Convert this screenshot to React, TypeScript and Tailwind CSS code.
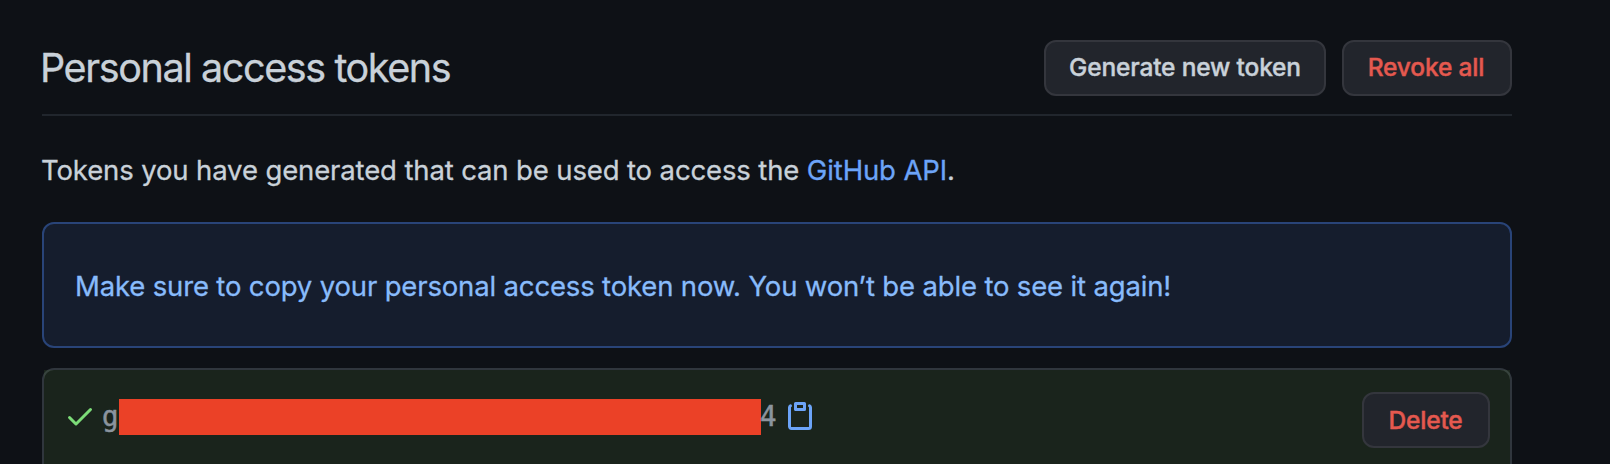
const buttonClass =
  "flex h-14 shrink-0 items-center justify-center rounded-xl border-2 border-[#34363d] bg-[#22252c] text-[24.5px] font-medium leading-none tracking-[-0.17px] [-webkit-text-stroke:0.4px]";

export default function App() {
  return (
    <main className="flex h-[464px] w-full flex-col overflow-hidden bg-[#0e1116] pr-[98px] pl-[42px] font-['Inter',sans-serif] text-[#c9d1d9] [-webkit-text-stroke:0.3px]">
      <header className="flex h-[116px] shrink-0 justify-between border-b-2 border-[#21262d] pt-10">
        <h1 className="-ml-0.5 pt-1 text-[39.5px] leading-[48px] tracking-[-1.4px]">Personal access tokens</h1>
        <div className="flex gap-4">
          <button className={`${buttonClass} w-[282px] pb-0.5`}>Generate new token</button>
          <button className={`${buttonClass} w-[170px] pr-0.5 pb-0.5 text-[#e5594f]`}>Revoke all</button>
        </div>
      </header>
      <p className="mt-[34px] -ml-px h-[72px] shrink-0 text-[27.5px] leading-10 tracking-[-0.13px]">
        Tokens you have generated that can be used to access the <a className="text-[#6ca4f8]">GitHub API</a>.
      </p>
      <section className="flex h-[126px] shrink-0 items-center rounded-xl border-2 border-[#294478] bg-[#151d2d] pt-1 pl-[31px] text-[27.5px] tracking-[-0.16px] text-[#88bbfb]">
        Make sure to copy your personal access token now. You won’t be able to see it again!
      </section>
      <section className="mt-5 h-[120px] shrink-0 rounded-t-xl border-2 border-[#30363d]">
        <div className="flex h-full justify-between bg-[#649645]/15 pt-[22px] pr-5 pl-5">
          <div className="flex h-[50px] items-center">
            <svg viewBox="0 0 16 16" className="-mt-0.5 size-8 fill-[#7cdc78]">
              <path d="M13.78 4.22a.75.75 0 010 1.06l-7.25 7.25a.75.75 0 01-1.06 0L2.22 9.28a.75.75 0 011.06-1.06L6 10.94l6.72-6.72a.75.75 0 011.06 0z" />
            </svg>
            <code className="ml-[7px] flex items-center font-['DejaVu_Sans_Mono',monospace] text-[27.5px] text-[#8b949e] [-webkit-text-stroke:0.5px]">
              <span className="-ml-px w-[17px]">g</span>
              <span className="h-9 w-[642px] bg-[#eb4127]" />
              <span className="-ml-px w-4">4</span>
            </code>
            <svg viewBox="0 0 16 16" className="-mt-0.5 ml-2 size-8 fill-[#6ca4f8]">
              <path fillRule="evenodd" d="M5.75 1a.75.75 0 00-.75.75v3c0 .414.336.75.75.75h4.5a.75.75 0 00.75-.75v-3a.75.75 0 00-.75-.75h-4.5zm.75 3V2.5h3V4h-3zm-2.874-.467a.75.75 0 00-.752-1.298A1.75 1.75 0 002 3.75v9.5c0 .966.784 1.75 1.75 1.75h8.5A1.75 1.75 0 0014 13.25v-9.5a1.75 1.75 0 00-.874-1.515.75.75 0 10-.752 1.298.25.25 0 01.126.217v9.5a.25.25 0 01-.25.25h-8.5a.25.25 0 01-.25-.25v-9.5a.25.25 0 01.126-.217z" />
            </svg>
          </div>
          <button className={`${buttonClass} w-32 pr-px text-[#e5594f]`}>Delete</button>
        </div>
      </section>
    </main>
  );
}
